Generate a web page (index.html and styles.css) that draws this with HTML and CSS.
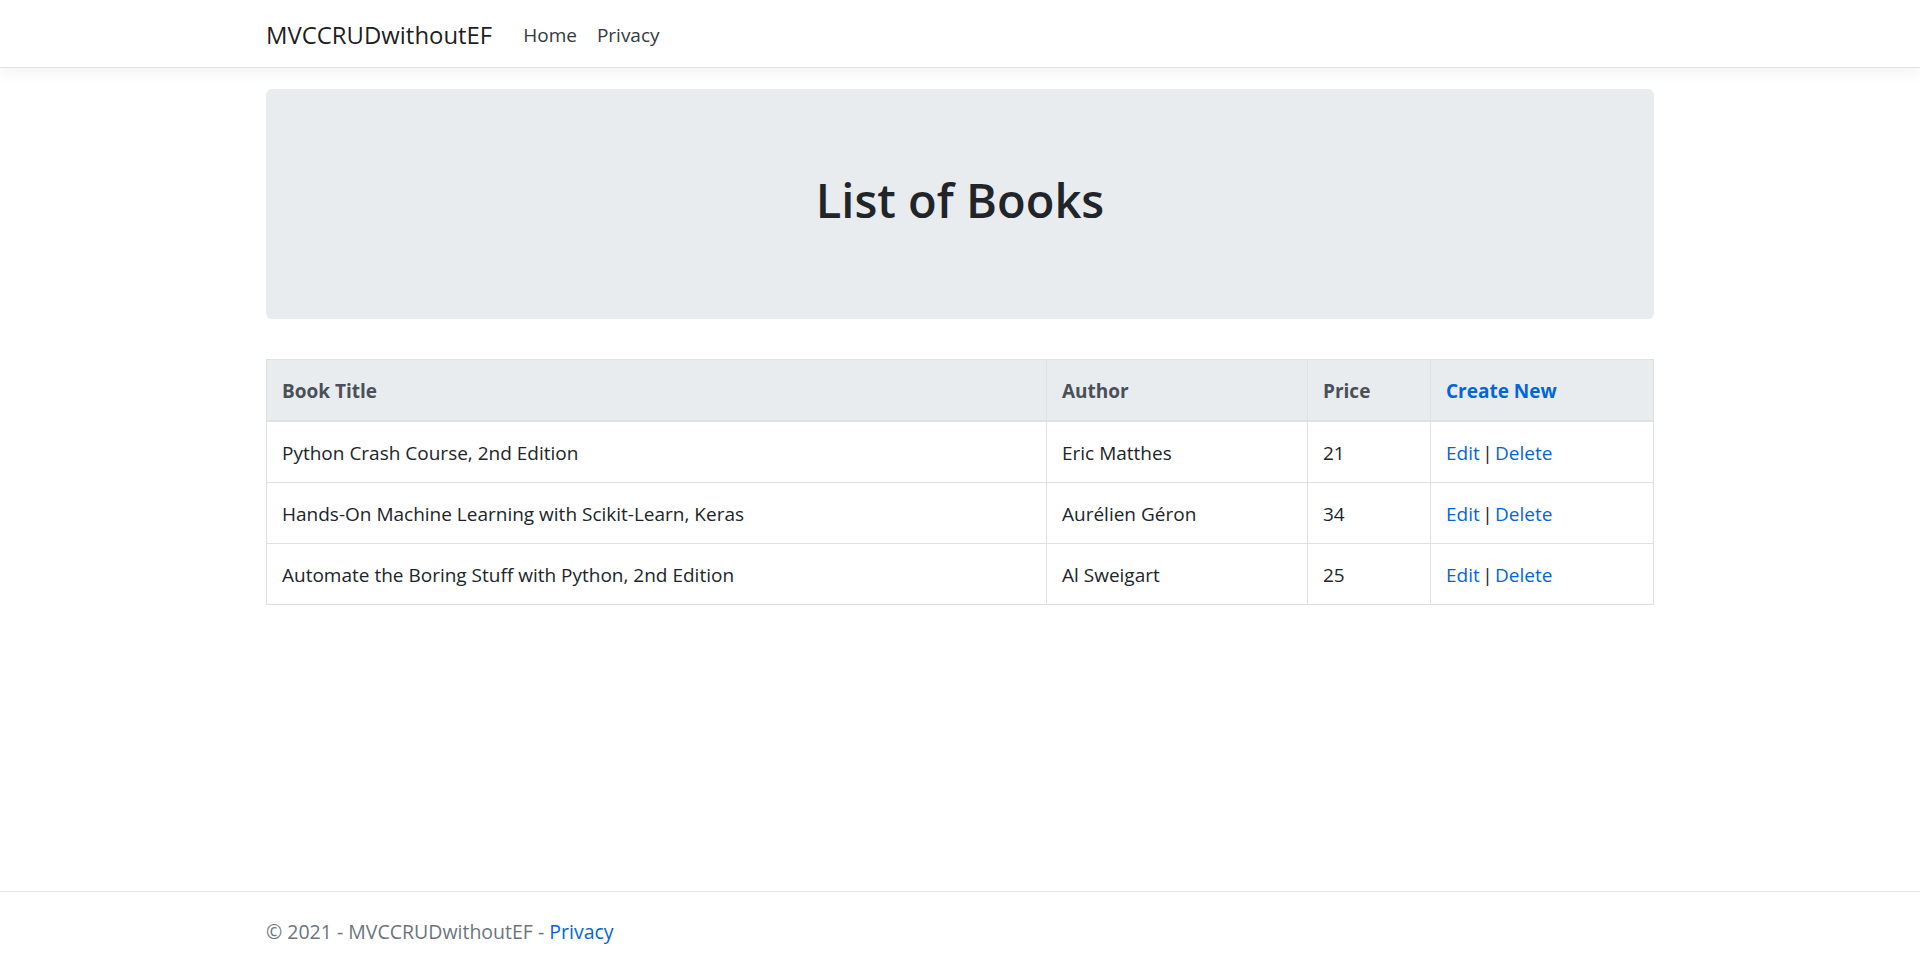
FILE: index.html
```html
<!DOCTYPE html>
<html lang="en">
<head>
<meta charset="utf-8">
<title>Index - MVCCRUDwithoutEF</title>
<link rel="stylesheet" href="styles.css">
</head>
<body>
<header>
  <nav class="navbar">
    <div class="container nav-inner">
      <a class="brand" href="#">MVCCRUDwithoutEF</a>
      <ul class="nav-links">
        <li><a class="nav-link" href="#">Home</a></li>
        <li><a class="nav-link" href="#">Privacy</a></li>
      </ul>
    </div>
  </nav>
</header>
<main class="container main">
  <div class="jumbotron">
    <h1 class="title">List of Books</h1>
  </div>
  <table class="books">
    <colgroup>
      <col class="c-title">
      <col class="c-author">
      <col class="c-price">
      <col class="c-actions">
    </colgroup>
    <thead>
      <tr>
        <th>Book Title</th>
        <th>Author</th>
        <th>Price</th>
        <th><a href="#">Create New</a></th>
      </tr>
    </thead>
    <tbody>
      <tr>
        <td>Python Crash Course, 2nd Edition</td>
        <td>Eric Matthes</td>
        <td>21</td>
        <td class="actions"><a href="#">Edit</a> | <a href="#">Delete</a></td>
      </tr>
      <tr>
        <td>Hands-On Machine Learning with Scikit-Learn, Keras</td>
        <td>Aurélien Géron</td>
        <td>34</td>
        <td class="actions"><a href="#">Edit</a> | <a href="#">Delete</a></td>
      </tr>
      <tr>
        <td>Automate the Boring Stuff with Python, 2nd Edition</td>
        <td>Al Sweigart</td>
        <td>25</td>
        <td class="actions"><a href="#">Edit</a> | <a href="#">Delete</a></td>
      </tr>
    </tbody>
  </table>
</main>
<footer class="footer">
  <div class="container footer-inner">&copy; 2021 - MVCCRUDwithoutEF - <a href="#">Privacy</a></div>
</footer>
</body>
</html>
```
FILE: styles.css
```css
* { box-sizing: border-box; }
html, body { height: 100%; }
body {
  margin: 0;
  min-height: 100vh;
  display: flex;
  flex-direction: column;
  font-family: "Open Sans", "Noto Sans", sans-serif;
  font-size: 19px;
  line-height: 30px;
  color: #212529;
  background: #fff;
}
a { color: #0366d6; text-decoration: none; }
.container {
  width: 1388px;
  margin: 0 auto;
}
.navbar {
  height: 68px;
  background: #fff;
  border-bottom: 1px solid #dee2e6;
  box-shadow: 0 5px 15px rgba(0,0,0,.05);
  margin-bottom: 21px;
}
.nav-inner {
  height: 67px;
  display: flex;
  align-items: center;
  padding-top: 2px;
}
.brand {
  font-size: 23.9px;
  color: rgba(0,0,0,.9);
  margin-right: 21px;
  line-height: 37px;
}
.nav-links {
  list-style: none;
  margin: 0;
  padding: 0;
  display: flex;
}
.nav-link {
  display: block;
  padding: 0 10px;
  color: #343a40;
}
.main { flex: 1; }
.jumbotron {
  background: #e9ecef;
  border-radius: 6px;
  padding: 81px 40px 79px;
  margin-bottom: 40px;
}
.title {
  margin: 0 0 10px;
  font-size: 47px;
  line-height: 60px;
  font-weight: 600;
  text-align: center;
}
.books {
  width: 100%;
  border-collapse: collapse;
  table-layout: fixed;
  border: 1px solid #dee2e6;
}
.c-title { width: 780px; }
.c-author { width: 261px; }
.c-price { width: 123px; }
.books th, .books td {
  border: 1px solid #dee2e6;
  padding: 16px 15px 14px;
  text-align: left;
  vertical-align: top;
}
.books thead th {
  background: #e9ecef;
  color: #495057;
  font-weight: 700;
  border-bottom: 2px solid #dee2e6;
}
.books td.actions { word-spacing: -2.5px; }
.footer {
  border-top: 1px solid #e5e5e5;
  padding-top: 5px;
  line-height: 69px;
  font-size: 19.5px;
  color: #6c757d;
  white-space: nowrap;
}
```
